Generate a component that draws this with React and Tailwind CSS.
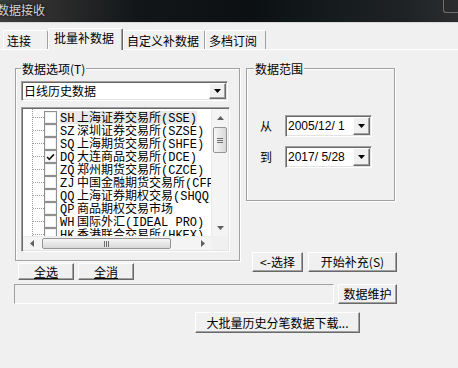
import React from "react";

const sunken =
  "border border-t-[#a0a0a0] border-l-[#a0a0a0] border-r-white border-b-white shadow-[inset_1px_1px_0_#696969,inset_-1px_-1px_0_#e3e3e3] p-[1px]";
const raised =
  "border border-t-white border-l-white border-r-[#696969] border-b-[#696969] shadow-[inset_-1px_-1px_0_#a0a0a0] bg-[#f0f0f0]";

function Tri({ dir = "down", color = "#000", w = 7, h = 4 }) {
  const paths = {
    down: `M0 0H${w}L${w / 2} ${h}Z`,
    up: `M0 ${h}H${w}L${w / 2} 0Z`,
  };
  if (dir === "left" || dir === "right") {
    const d = dir === "left" ? `M${h} 0V${w}L0 ${w / 2}Z` : `M0 0V${w}L${h} ${w / 2}Z`;
    return (
      <svg width={h} height={w} viewBox={`0 0 ${h} ${w}`}>
        <path d={d} fill={color} />
      </svg>
    );
  }
  return (
    <svg width={w} height={h} viewBox={`0 0 ${w} ${h}`}>
      <path d={paths[dir]} fill={color} />
    </svg>
  );
}

function DropBtn({ h = "h-[16px]" }) {
  return (
    <div className={`ml-auto w-[17px] ${h} ${raised} flex items-center justify-center`}>
      <Tri dir="down" w={7} h={4} />
    </div>
  );
}

function Btn({ children, className = "" }) {
  return (
    <div className={`${raised} flex items-center justify-center whitespace-nowrap ${className}`}>
      {children}
    </div>
  );
}

function Tab({ label, selected, w, pl }) {
  if (selected) {
    return (
      <div
        className={`relative z-10 -mb-px h-[22px] ${w} ${pl} pt-[2px] bg-[#f0f0f0] border-t border-l border-r border-t-white border-l-white border-r-[#696969] shadow-[inset_-1px_0_0_#a0a0a0] rounded-t-[2px] whitespace-nowrap`}
      >
        {label}
      </div>
    );
  }
  return (
    <div
      className={`h-[19px] ${w} ${pl} pt-[3px] border-t border-l border-r border-t-white border-l-white border-r-[#a0a0a0] rounded-t-[2px] whitespace-nowrap`}
    >
      {label}
    </div>
  );
}

const mono = "font-['Liberation_Mono','Noto_Sans_CJK_SC',monospace]";

const rows = [
  { c: "SH", n: "上海证券交易所", e: "(SSE)", hl: true },
  { c: "SZ", n: "深圳证券交易所", e: "(SZSE)" },
  { c: "SQ", n: "上海期货交易所", e: "(SHFE)" },
  { c: "DQ", n: "大连商品交易所", e: "(DCE)", checked: true },
  { c: "ZQ", n: "郑州期货交易所", e: "(CZCE)" },
  { c: "ZJ", n: "中国金融期货交易所", e: "(CFFEX)" },
  { c: "QQ", n: "上海证券期权交易", e: "(SHQQ)" },
  { c: "QP", n: "商品期权交易市场", e: "" },
  { c: "WH", n: "国际外汇", e: "(IDEAL PRO)" },
  { c: "HK", n: "香港联合交易所", e: "(HKEX)" },
];

function Check({ checked }) {
  return (
    <div className="w-[13px] h-[13px] shrink-0 border border-[#8e8f8f] bg-white shadow-[inset_0_0_0_1px_#f0f0f0] flex items-center justify-center">
      {checked && (
        <svg width="9" height="8" viewBox="0 0 9 8">
          <path d="M1 4L3.3 6.3L8 1.3" stroke="#1a1a1a" strokeWidth="1.7" fill="none" />
        </svg>
      )}
    </div>
  );
}

function TreeList() {
  return (
    <div className={`mt-[6px] ml-[5px] w-[209px] h-[145px] bg-white ${sunken} flex flex-col`}>
      <div className="h-[127px] flex">
        <div className="flex-1 overflow-hidden">
          <div className="ml-[9px] h-full border-l border-dotted border-[#9a9a9a] pt-[2px]">
            {rows.map((r) => (
              <div key={r.c} className="h-[13px] flex items-center whitespace-nowrap">
                <span className="w-[11px] shrink-0 border-t border-dotted border-[#9a9a9a]" />
                <Check checked={r.checked} />
                <div className="ml-[3px] h-[13px] overflow-visible">
                  <p className={`h-[13px] leading-[12px] whitespace-nowrap ${r.hl ? "bg-[#e9e9e9]" : ""}`}>
                    <span className={`${mono} inline-block w-[17px]`}>{r.c}</span>
                    <span>{r.n}</span>
                    <span className={mono}>{r.e}</span>
                  </p>
                </div>
              </div>
            ))}
          </div>
        </div>
        <div className="w-[17px] flex flex-col bg-[#f4f4f4] border-l border-[#ebebeb]">
          <div className="h-[17px] flex items-center justify-center">
            <Tri dir="up" color="#606060" />
          </div>
          <div className="mt-[1px] mx-[1px] h-[26px] rounded-[2px] border border-[#959595] bg-gradient-to-r from-[#f7f7f7] to-[#d8d8d8] flex flex-col items-center justify-center gap-[1px]">
            <span className="w-[6px] h-[1px] bg-[#707070]" />
            <span className="w-[6px] h-[1px] bg-[#707070]" />
            <span className="w-[6px] h-[1px] bg-[#707070]" />
          </div>
          <div className="flex-1" />
          <div className="h-[17px] flex items-center justify-center">
            <Tri dir="down" color="#606060" />
          </div>
        </div>
      </div>
      <div className="h-[14px] flex">
        <div className="flex-1 flex bg-[#f4f4f4] border-t border-[#ebebeb]">
          <div className="w-[17px] flex items-center justify-center">
            <Tri dir="left" color="#606060" />
          </div>
          <div className="ml-[2px] my-[1px] w-[129px] rounded-[2px] border border-[#959595] bg-gradient-to-b from-[#f7f7f7] to-[#d8d8d8] flex items-center justify-center gap-[1px]">
            <span className="w-[1px] h-[6px] bg-[#707070]" />
            <span className="w-[1px] h-[6px] bg-[#707070]" />
            <span className="w-[1px] h-[6px] bg-[#707070]" />
          </div>
          <div className="flex-1" />
          <div className="w-[17px] flex items-center justify-center">
            <Tri dir="right" color="#606060" />
          </div>
        </div>
        <div className="w-[17px] bg-[#f0f0f0]" />
      </div>
    </div>
  );
}

function GroupBox({ label, className = "", labelMl = "ml-[5px]", children }) {
  return (
    <div
      className={`border border-[#a0a0a0] shadow-[inset_1px_1px_0_#fff,1px_1px_0_#fff] flex flex-col ${className}`}
    >
      <span className={`self-start -mt-[7px] ${labelMl} px-[1px] bg-[#f0f0f0] leading-[14px] whitespace-nowrap`}>
        {label}
      </span>
      {children}
    </div>
  );
}

function DatePicker({ value, className = "" }) {
  return (
    <div className={`w-[87px] h-[22px] bg-white ${sunken} flex items-center ${className}`}>
      <span className="pl-[1px] font-['Liberation_Sans',sans-serif] text-[12px] whitespace-pre">{value}</span>
      <DropBtn h="h-[18px]" />
    </div>
  );
}

export default function App() {
  return (
    <div className="w-[458px] h-[368px] overflow-hidden bg-[#f0f0f0] text-[12px] leading-[14px] text-black font-['Noto_Sans_CJK_SC',sans-serif]">
      {/* title bar */}
      <div className="h-[23px] border-b border-[#d8d8d8] flex bg-[linear-gradient(90deg,#3d3d3d_0%,#2a2a2a_14%,#121619_30%,#0c1013_55%,#141a1c_70%,#1f2224_88%,#2b2d2f_100%)]">
        <span className="-ml-[3px] pt-[3px] text-[#d4d4d4] [text-shadow:0_0_4px_#000]">数据接收</span>
        <div className="ml-auto w-[15px] h-[13px] border-l border-b border-[#6d6d6d] rounded-bl-[3px]" />
      </div>

      {/* tabs */}
      <div className="mt-[4px] h-[22px] flex items-end pl-[3px]">
        <Tab label="连接" w="w-[45px]" pl="pl-[3px]" />
        <Tab label="批量补数据" selected w="w-[75px]" pl="pl-[5px]" />
        <Tab label="自定义补数据" w="w-[82px]" pl="pl-[3px]" />
        <Tab label="多档订阅" w="w-[61px]" pl="pl-[3px]" />
      </div>

      {/* panel */}
      <div className="border-t border-white pl-[14px]">
        <div className="mt-[18px] flex items-start">
          {/* left column */}
          <div className="w-[226px] flex flex-col">
            <GroupBox label="数据选项(T)" className="ml-[1px] w-[225px] h-[193px]">
              <div className={`mt-[5px] ml-[5px] w-[207px] h-[20px] bg-white ${sunken} flex items-center`}>
                <span className="pl-[1px]">日线历史数据</span>
                <DropBtn />
              </div>
              <TreeList />
            </GroupBox>
            <div className="mt-[2px] ml-[4px] flex gap-[4px]">
              <Btn className="w-[56px] h-[17px]">
                <span className="underline underline-offset-[1px]">全选</span>
              </Btn>
              <Btn className="w-[56px] h-[17px]">
                <span className="underline underline-offset-[1px]">全消</span>
              </Btn>
            </div>
          </div>

          {/* right column */}
          <div className="ml-[6px] flex flex-col">
            <GroupBox label="数据范围" labelMl="ml-[7px]" className="w-[149px] h-[133px]">
              <div className="mt-[39px] flex items-center">
                <span className="ml-[13px]">从</span>
                <DatePicker value="2005/12/ 1" className="ml-[13px]" />
              </div>
              <div className="mt-[9px] flex items-center">
                <span className="ml-[13px]">到</span>
                <DatePicker value="2017/ 5/28" className="ml-[13px]" />
              </div>
            </GroupBox>
            <div className="mt-[51px] ml-[6px] flex gap-[5px]">
              <Btn className="w-[51px] h-[20px]">&lt;-选择</Btn>
              <Btn className="w-[89px] h-[20px]">开始补充(S)</Btn>
            </div>
          </div>
        </div>

        <div className="mt-[4px] flex">
          <div className="w-[320px] h-[20px] border border-t-[#a0a0a0] border-l-[#a0a0a0] border-r-white border-b-white" />
          <Btn className="ml-[4px] w-[59px] h-[20px]">数据维护</Btn>
        </div>

        <div className="mt-[8px] flex">
          <Btn className="ml-[181px] w-[165px] h-[21px]">大批量历史分笔数据下载...</Btn>
        </div>
      </div>
    </div>
  );
}
